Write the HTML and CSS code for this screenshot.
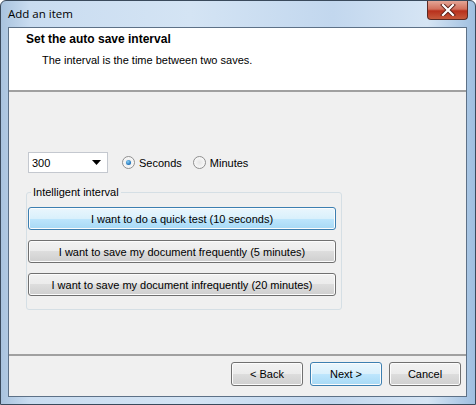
FILE: index.html
```html
<!DOCTYPE html>
<html>
<head>
    <meta charset="UTF-8">
    <title>Add an item</title>
    <link rel="stylesheet" href="styles.css">
</head>
<body>
    <div class="window">
        <div class="titlebar">
            <span class="title">Add an item</span>
            <div class="close">
                <svg width="16" height="12" viewBox="0 0 16 12">
                    <path d="M3 1 L13 11 M13 1 L3 11" stroke="#5a2018" stroke-width="4" stroke-linecap="square"/>
                    <path d="M3 1 L13 11 M13 1 L3 11" stroke="#fff" stroke-width="2.2" stroke-linecap="square"/>
                </svg>
            </div>
        </div>
        <div class="client">
            <div class="header">
                <div class="header-title">Set the auto save interval</div>
                <div class="header-text">The interval is the time between two saves.</div>
            </div>
            <div class="content">
                <div class="interval-row">
                    <div class="combo">
                        <span>300</span>
                        <svg width="9" height="5" viewBox="0 0 9 5"><path d="M0 0 H9 L4.5 5 Z" fill="#000"/></svg>
                    </div>
                    <label class="radio checked"><span class="dot"></span>Seconds</label>
                    <label class="radio"><span class="dot"></span>Minutes</label>
                </div>
                <fieldset class="group">
                    <legend>Intelligent interval</legend>
                    <div class="btn wide default">I want to do a quick test (10 seconds)</div>
                    <div class="btn wide">I want to save my document frequently (5 minutes)</div>
                    <div class="btn wide">I want to save my document infrequently (20 minutes)</div>
                </fieldset>
            </div>
            <div class="footer">
                <div class="btn nav">&lt; Back</div>
                <div class="btn nav default">Next &gt;</div>
                <div class="btn nav">Cancel</div>
            </div>
        </div>
    </div>
</body>
</html>
```

FILE: styles.css
```css
body {
    margin: 0;
    width: 476px;
    height: 405px;
    overflow: hidden;
    font-family: 'Liberation Sans', Arial, sans-serif;
    font-size: 11px;
    color: #000;
}
.window {
    box-sizing: border-box;
    width: 476px;
    height: 405px;
    display: flex;
    flex-direction: column;
    padding: 0 8px 7px 7px;
    border: 1px solid #3a4a5c;
    border-radius: 6px 6px 0 0;
    background: linear-gradient(to right, #a9c3de 0%, #c9dcf0 6%, #d4e4f4 40%, #c2d7ee 70%, #d6e5f4 90%, #9fbfe0 100%);
}
.titlebar {
    height: 26px;
    display: flex;
    align-items: flex-start;
    justify-content: space-between;
}
.title {
    font-family: 'Open Sans', 'DejaVu Sans', sans-serif;
    font-size: 11.5px;
    margin-top: 5px;
    color: #000;
}
.close {
    width: 41px;
    height: 19px;
    margin-right: -1px;
    border: 1px solid #5a2a24;
    border-top: none;
    border-radius: 0 0 4px 4px;
    box-sizing: border-box;
    background: linear-gradient(to bottom, #e4a596 0%, #d2705c 45%, #b8301c 55%, #c65a3c 100%);
    display: flex;
    align-items: center;
    justify-content: center;
}
.client {
    flex: 1;
    display: flex;
    flex-direction: column;
    border: 1px solid #5d7187;
    background: #f0f0f0;
}
.header {
    height: 64px;
    box-sizing: border-box;
    background: #fff;
    border-bottom: 2px solid #a0a0a0;
    padding: 4px 0 0 17px;
}
.header-title {
    font-weight: bold;
    font-size: 12px;
}
.header-text {
    margin: 8px 0 0 16px;
}
.content {
    flex: 1;
    padding: 60px 0 0 19px;
    border-bottom: 2px solid #a0a0a0;
}
.interval-row {
    display: flex;
    align-items: center;
}
.combo {
    box-sizing: border-box;
    width: 80px;
    height: 21px;
    background: #fff;
    border: 1px solid #c4c8cf;
    display: flex;
    align-items: center;
    justify-content: space-between;
    padding: 0 6px 0 3px;
}
.radio {
    display: flex;
    align-items: center;
    margin-left: 14px;
}
.radio + .radio {
    margin-left: 11px;
}
.dot {
    box-sizing: border-box;
    width: 13px;
    height: 13px;
    border-radius: 50%;
    border: 1px solid #8f8f8f;
    background: radial-gradient(circle, #e6e6e6 0%, #f8f8f8 70%);
    margin-right: 4px;
    display: flex;
    align-items: center;
    justify-content: center;
}
.checked .dot::after {
    content: "";
    width: 5px;
    height: 5px;
    border-radius: 50%;
    background: radial-gradient(circle at 40% 35%, #8ad0f5 0%, #1a6fb8 70%, #0b4a8a 100%);
}
.group {
    width: 316px;
    box-sizing: border-box;
    margin: 13px 0 0 -2px;
    padding: 0 4px 13px 1px;
    border: 1px solid #d5dfe5;
    border-radius: 3px;
}
.group legend {
    padding: 0 2px;
    margin-left: 3px;
}
.btn {
    box-sizing: border-box;
    display: flex;
    align-items: center;
    justify-content: center;
    border: 1px solid #707070;
    border-radius: 3px;
    background: linear-gradient(to bottom, #f2f2f2 0%, #ebebeb 50%, #dddddd 50%, #cfcfcf 100%);
    box-shadow: inset 0 0 0 1px #fcfcfc;
}
.btn.default {
    border-color: #3c7fb1;
    background: linear-gradient(to bottom, #eaf6fd 0%, #d9f0fc 50%, #bee6fd 50%, #a7d9f5 100%);
}
.wide {
    width: 308px;
    height: 23px;
    margin-top: 10px;
}
.wide:first-of-type {
    margin-top: 9px;
}
.footer {
    height: 40px;
    display: flex;
    justify-content: flex-end;
    align-items: flex-start;
    gap: 7px;
    padding: 6px 5px 0 0;
    box-sizing: border-box;
}
.nav {
    width: 72px;
    height: 24px;
}
```
